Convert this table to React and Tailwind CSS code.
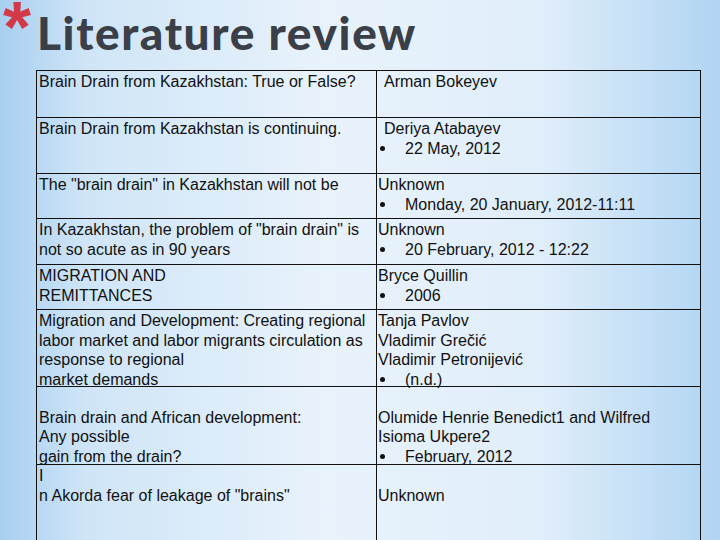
import React from "react";

const font = { fontFamily: '"Liberation Sans", Arial, sans-serif' };

function Bullet({ children }) {
  return (
    <div className="flex items-center">
      <span className="w-[27px] pl-[2px] flex items-center">
        <span className="block w-[5px] h-[5px] rounded-full bg-[#111]" />
      </span>
      <span>{children}</span>
    </div>
  );
}

const rows = [
  {
    h: "h-[46px]",
    left: <div>Brain Drain from Kazakhstan: True or False?</div>,
    right: <div className="pl-[6px]">Arman Bokeyev</div>,
  },
  {
    h: "h-[56px]",
    left: <div>Brain Drain from Kazakhstan is continuing.</div>,
    right: (
      <div>
        <div className="pl-[6px]">Deriya Atabayev</div>
        <Bullet>22 May, 2012</Bullet>
      </div>
    ),
  },
  {
    h: "h-[45px]",
    left: <div>The "brain drain" in Kazakhstan will not be</div>,
    right: (
      <div>
        <div>Unknown</div>
        <Bullet>Monday, 20 January, 2012-11:11</Bullet>
      </div>
    ),
  },
  {
    h: "h-[46px]",
    left: (
      <div>
        <div>In Kazakhstan, the problem of "brain drain" is</div>
        <div>not so acute as in 90 years</div>
      </div>
    ),
    right: (
      <div>
        <div>Unknown</div>
        <Bullet>20 February, 2012 - 12:22</Bullet>
      </div>
    ),
  },
  {
    h: "h-[45px]",
    left: (
      <div>
        <div>MIGRATION AND</div>
        <div>REMITTANCES</div>
      </div>
    ),
    right: (
      <div>
        <div>Bryce Quillin</div>
        <Bullet>2006</Bullet>
      </div>
    ),
  },
  {
    h: "h-[77px]",
    left: (
      <div>
        <div>Migration and Development: Creating regional</div>
        <div>labor market and labor migrants circulation as</div>
        <div>response to regional</div>
        <div>market demands</div>
      </div>
    ),
    right: (
      <div>
        <div>Tanja Pavlov</div>
        <div>Vladimir Grečić</div>
        <div>Vladimir Petronijević</div>
        <Bullet>(n.d.)</Bullet>
      </div>
    ),
  },
  {
    h: "h-[78px]",
    left: (
      <div>
        <div>&nbsp;</div>
        <div>Brain drain and African development:</div>
        <div>Any possible</div>
        <div>gain from the drain?</div>
      </div>
    ),
    right: (
      <div>
        <div>&nbsp;</div>
        <div>Olumide Henrie Benedict1 and Wilfred</div>
        <div>Isioma Ukpere2</div>
        <Bullet>February, 2012</Bullet>
      </div>
    ),
  },
  {
    h: "h-[100px]",
    left: (
      <div>
        <div>I</div>
        <div>n Akorda fear of leakage of "brains"</div>
      </div>
    ),
    right: (
      <div>
        <div>&nbsp;</div>
        <div>Unknown</div>
      </div>
    ),
  },
];

export default function App() {
  return (
    <div
      className="relative w-[720px] h-[540px] overflow-hidden bg-[linear-gradient(90deg,#a8cff0_0%,#cfe5f7_12%,#e8f2fb_45%,#e0eefa_75%,#b0d4f2_100%)]"
      style={font}
    >
      <div className="flex items-start h-[70px]">
        <span className="ml-[3px] w-[32px] h-[55px] text-[72px] leading-[55px] font-bold text-[#d23a4a]">
          *
        </span>
        <span
          className="mt-[7px] ml-[2px] text-[46px] leading-[52px] font-black tracking-[1.6px] text-[#3b4048]"
          style={{ fontFamily: 'Lato, "DejaVu Sans", sans-serif' }}
        >
          Literature review
        </span>
      </div>
      <div className="ml-[36px] w-[665px] border border-[#111] text-[16px] leading-[19.5px] text-[#111]">
        {rows.map((r, i) => (
          <div
            key={i}
            className={`grid grid-cols-[340px_323px] ${r.h} ${i > 0 ? "border-t border-[#111]" : ""}`}
          >
            <div className="pl-[2px] pt-[1px] border-r border-[#111]">{r.left}</div>
            <div className="pl-[1px] pt-[1px]">{r.right}</div>
          </div>
        ))}
      </div>
    </div>
  );
}
